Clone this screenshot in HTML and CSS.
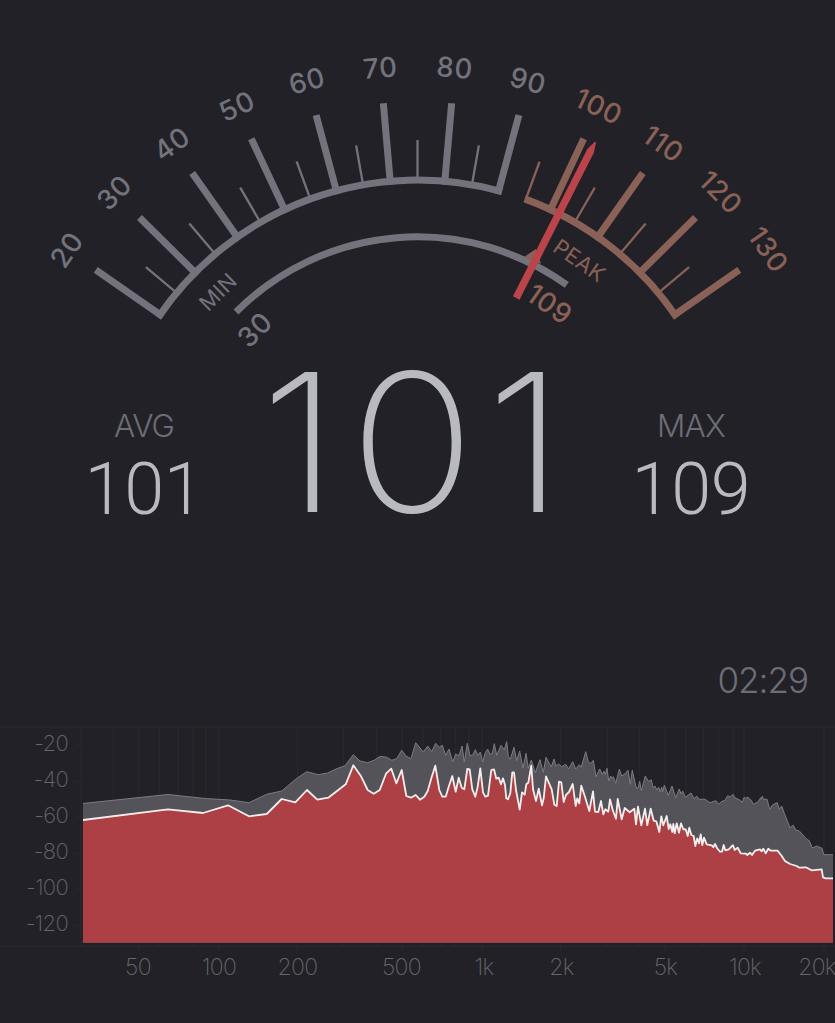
FILE: index.html
```
<!DOCTYPE html>
<html lang="en">
<head>
  <meta charset="UTF-8" />
  <title>Sound Level Meter</title>
  <link rel="stylesheet" href="styles.css">
</head>
<body>

  <svg class="dial" width="835" height="360" viewBox="0 0 835 360">
    <defs>
      <path id="major" d="M0 -310V-391.8" />
      <path id="minor" d="M0 -313.5V-353.5" />
    </defs>

    <!-- everything is drawn around the dial centre, 1 degree per dB -->
    <g transform="translate(417.5 493.5)">
      <g class="scale">
        <path d="M-259.4 -176A313.5 313.5 0 0 1 84.5 -301.9" />
        <use href="#major" transform="rotate(-55.2)" />
        <use href="#major" transform="rotate(-45.2)" />
        <use href="#major" transform="rotate(-35.1)" />
        <use href="#major" transform="rotate(-25.1)" />
        <use href="#major" transform="rotate(-15)" />
        <use href="#major" transform="rotate(-5)" />
        <use href="#major" transform="rotate(5)" />
        <use href="#major" transform="rotate(15)" />
      </g>
      <g class="scale thin">
        <use href="#minor" transform="rotate(-50.2)" />
        <use href="#minor" transform="rotate(-40.2)" />
        <use href="#minor" transform="rotate(-30.1)" />
        <use href="#minor" transform="rotate(-20)" />
        <use href="#minor" transform="rotate(-10)" />
        <use href="#minor" />
        <use href="#minor" transform="rotate(10)" />
      </g>

      <g class="scale hot">
        <path d="M107.2 -294.6A313.5 313.5 0 0 1 259.4 -176" />
        <use href="#major" transform="rotate(25.1)" />
        <use href="#major" transform="rotate(35.1)" />
        <use href="#major" transform="rotate(45.2)" />
        <use href="#major" transform="rotate(55.2)" />
      </g>
      <g class="scale hot thin">
        <use href="#minor" transform="rotate(20.2)" />
        <use href="#minor" transform="rotate(30.1)" />
        <use href="#minor" transform="rotate(40.2)" />
        <use href="#minor" transform="rotate(50.2)" />
      </g>

      <g class="label">
        <text y="-417.5" transform="rotate(-55.2)">20</text>
        <text y="-417.5" transform="rotate(-45.2)">30</text>
        <text y="-417.5" transform="rotate(-35.1)">40</text>
        <text y="-417.5" transform="rotate(-25)">50</text>
        <text y="-417.5" transform="rotate(-15)">60</text>
        <text y="-417.5" transform="rotate(-5)">70</text>
        <text y="-417.5" transform="rotate(5)">80</text>
        <text y="-417.5" transform="rotate(15)">90</text>
        <text y="-221" transform="rotate(-44.8)">30</text>
        <text class="caption" y="-276" transform="rotate(-44.7)">MIN</text>
      </g>
      <g class="label hot">
        <text y="-417.5" transform="rotate(25.1)">100</text>
        <text y="-417.5" transform="rotate(35.1)">110</text>
        <text y="-417.5" transform="rotate(45.2)">120</text>
        <text y="-417.5" transform="rotate(55.2)">130</text>
        <text y="-221" transform="rotate(34.9)">109</text>
        <text class="caption" y="-276" transform="rotate(34.8)">PEAK</text>
      </g>

      <!-- min / peak range -->
      <path class="range" d="M-181.5 -181.5A256.5 256.5 0 0 1 149.3 -208.6" />
      <path class="peak-mark" d="M106.5 -236.5L118.500 -244.500L123.500 -229.500Z" />

      <path class="needle" transform="rotate(26.8)" d="M-3.7 -219V-384L-.4 -394H1L3.7 -384V-219Z" />
    </g>
  </svg>

  <div class="readouts">
    <div class="side">
      <div class="name">AVG</div>
      <div class="value">101</div>
    </div>
    <div class="current">101</div>
    <div class="side">
      <div class="name">MAX</div>
      <div class="value">109</div>
    </div>
  </div>

  <div class="timer">02:29</div>

  <svg class="spectrum" width="835" height="297" viewBox="0 726 835 297">
    <clipPath id="plot"><rect x="83" y="727" width="750" height="215.700" /></clipPath>

    <path class="grid" d="M0 727H835M0 946.5H835M81 727V946M113.500 727V946M138.500 727V951M159.500 727V946M178 727V946M193 727V946M206 727V946M218.500 727V951M297.500 727V951M343.500 727V946M376.500 727V946M402 727V951M423 727V946M440.500 727V946M455.500 727V946M469 727V946M482 727V951M560.500 727V951M607.500 727V946M639.500 727V946M665 727V951M686 727V946M703.500 727V946M718.500 727V946M733.500 727V946M744 727V951M824 727V951" />
    <path class="grid" d="M75 745.500H83M75 781.500H83M75 817.500H83M75 853.500H83M75 889.500H83M75 925.500H83" />

    <!-- the curves run past the plot area so only their tops get an outline -->
    <g clip-path="url(#plot)">
      <path class="peak-curve" d="M78 804L168 794.500L205 798.500L230 800L249 802.700L266.700 794.300L281.700 791L296 779L306.700 771.700L318.300 774.700L327.700 773L336.700 768.700L345 765.700L353.300 754.700L360 761L367.700 762.700L374 760.300L380.300 756.300L386.700 757.300L391.700 760.300L396.700 758.700L401.700 750.300L406 756L411 758.700L415.700 742.700L423.300 752L427.700 746L431.700 751.700L435.700 743.300L439.300 747.300L442.300 745.300L445.700 755.300L449 749L452.700 762L455.700 754L459 755.700L462 746L464.300 762L467.300 743.300L470 755.700L472.700 755L475.300 749.700L477.700 755.300L480.300 752L482.700 762L485.300 752.700L487.700 749L490 754.300L492.300 753.300L494.300 743.700L496.700 755.300L501 745.300L504.300 750L506.700 741.700L508.300 756.700L510.300 759.300L514 747.300L516.700 760.700L519.700 751L523 768.300L526 753.300L528.300 768.300L531.300 760L535.300 772.700L540 759.700L543.300 772.300L546 757.300L551.300 767L554 759L556 766L558.700 764L561.700 766.700L565.700 764.300L568.700 769L572.700 761.700L575.700 769L579.300 764.700L581.300 767.300L585.700 751.700L588 760.700L590.700 763.700L593.300 760.300L596 776.700L599.700 769L602.300 774.300L604 771.300L605.300 774.300L607 768.300L608.700 781L610.700 776L612.300 778.700L613.300 776.700L615.700 783.300L619.300 769.300L621.700 776L625 773.700L628 770.300L630.300 784.300L632.300 770.300L636 787.300L638 788.300L639.700 781.300L641.300 790.700L645.300 776L648.300 781.300L651.300 780L653 787.700L655 786L656.700 790L658.700 787.300L660.300 792L661.700 787.300L662.700 791.700L664.300 785.300L668.300 795.300L672 786L675.700 797.700L679.300 789L681 794L682.700 791L685.300 797.300L691 793L694.300 798.700L696.700 796L699 799.300L705 799.300L710 802.700L716 800.700L718.700 804.300L721.300 801.700L725 800.300L727.700 795.700L730.300 797L733 794.300L735 798L739.300 799.700L742.300 802.300L744 797.300L745.700 798.300L747.700 797L751.700 801L753.300 804.300L758.300 801.700L760.700 797.700L761.300 799.300L762.300 796.300L763.700 799.300L767 799.300L769.700 809.300L772.700 804.700L777.300 802.700L779.300 809.300L781.700 806L784.300 813.300L790 827.700L793.300 825.300L795.700 830L799.300 831L806.700 839.300L809.300 840.700L812.300 848L816.700 846L822 848.300L823.700 854.700H840V950H78Z" />

      <path class="live-curve" d="M78 820.600L168 809.300L203 813L228 805.300L249 816.300L266.700 814L281.700 799L295.300 802.300L307 790L317.300 799.700L328.300 797.700L345.700 784.300L353.300 765.300L360.700 775.700L367.700 790L373.700 793.700L379.700 790L386 773.700L391.300 768.700L396.300 783.300L401.700 770L406.300 796L411 797.700L415.700 795L420 799.700L424.300 796.700L427.700 791L431.700 777L435.300 765.700L439.300 790L442.300 796.700L445.700 796.700L448.700 786.700L452.300 776L455.700 791.700L458.700 777.700L461.700 787.700L464.300 789.300L467.300 769L469.700 769.300L472.300 789.300L475.300 796.700L477.700 786.700L480.300 768.300L483 792.300L485.300 796.700L488 795.700L491.300 770L494 769.300L496.300 778.700L498.700 777.700L501 784.300L503 778.300L505 785L506.300 798.300L508 799.300L510.300 793.300L512.300 772.300L514 772.300L516 790L519.700 809.700L522 792.300L524.700 794.700L526.300 784.300L528.300 782.700L531.300 765.700L533 789L536 801L538.700 788.700L542 805.300L543.700 798.300L546 776.300L551.700 789.300L554.300 804.700L556.700 806L559 781.700L561.300 782.300L563.700 802L566 795L569 792L572.700 784L575.700 806L577.300 798.300L579.300 803.300L581.300 785.700L585 796.700L589.300 811L593 791.300L595 811.700L598.300 812L601 801L603.300 814.300L605.300 809.300L608.300 811.700L610 799.300L612.700 810L616 818.700L617.700 799L621.700 819.300L624.700 808L629.700 812.300L634.300 808.700L636 824.300L638 806.700L641.300 825.300L645 808.700L647.300 825L650.700 808.700L653.700 820.700L656.300 821.300L659.300 832L661.300 816.300L663.300 825.300L666.700 816L668.700 829L670.300 824.300L672.300 832L673.300 824L674.700 833.300L676.700 823.300L679 832.700L681 823.300L683.300 829.300L685.700 829.300L687.700 836L689.300 827.700L691.300 835L693.700 836L695.300 846L697.300 838.300L699 843.300L700.700 834.300L702.300 845L704 837.700L706.700 844.300L711.700 845.300L713.300 847.300L715 844L717 848L720 851.700L722 851.700L723.700 845L725.300 850.300L728.700 849.300L730.700 847.300L733 845.300L734.700 850L737.700 847.700L740.700 853.300L746 853.700L747.300 855L750 852.700L752 855L755 850.700L760 849.300L761.700 851.300L763.300 848.700L765.700 853.300L768.300 848.700L770.700 850.700L777.700 850.700L781.700 856L785 861L790 864L796.700 866L799.300 867.700L805.700 867.300L811.700 870.300L821.700 869.300L823 877.300L825.700 878.300H840V950H78Z" />
    </g>

    <g class="axis db">
      <text x="68" y="751">-20</text>
      <text x="68" y="787">-40</text>
      <text x="68" y="823">-60</text>
      <text x="68" y="859">-80</text>
      <text x="68" y="895">-100</text>
      <text x="68" y="931">-120</text>
    </g>
    <g class="axis hz">
      <text x="138" y="975">50</text>
      <text x="219" y="975">100</text>
      <text x="297.500" y="975">200</text>
      <text x="401.500" y="975">500</text>
      <text x="484" y="975">1k</text>
      <text x="561.500" y="975">2k</text>
      <text x="665.500" y="975">5k</text>
      <text x="745" y="975">10k</text>
      <text x="817" y="975">20k</text>
    </g>
  </svg>

</body>
</html>
```
FILE: styles.css
```
body {
  margin: 0;
  width: 835px;
  height: 1023px;
  display: flex;
  flex-direction: column;
  overflow: hidden;
  background: #222127;
  color: #b9b9c1;
  font-family: Inter, "Liberation Sans", sans-serif;
}
svg {
  display: block;
  flex: none;
}

/* dial */
.scale {
  fill: none;
  stroke: #73737d;
  stroke-width: 7;
}
.scale.thin {
  stroke-width: 2.3;
}
.scale.hot {
  stroke: #8a6156;
}
.label {
  fill: #73737d;
  font-size: 27.5px;
  font-weight: 500;
  letter-spacing: 0.6px;
  text-anchor: middle;
}
.label.hot {
  fill: #8a6156;
}
.caption {
  font-size: 21.5px;
  font-weight: 400;
  letter-spacing: 0.4px;
}
.range {
  fill: none;
  stroke: #73737d;
  stroke-width: 7;
}
.peak-mark {
  fill: #8a6156;
}
.needle {
  fill: #bb444a;
}

/* numbers */
.readouts {
  display: grid;
  grid-template-columns: 190px 1fr 190px;
  padding: 0 49px;
  height: 290px;
}
.side {
  padding-top: 47px;
  text-align: center;
}
.name {
  color: #6d6d76;
  font-size: 31.5px;
  font-weight: 300;
  line-height: 38px;
  letter-spacing: -0.8px;
}
.value {
  font-family: Roboto, sans-serif;
  font-size: 72px;
  font-weight: 300;
  line-height: 90px;
  letter-spacing: -0.3px;
}
.current {
  text-align: center;
  font-size: 193px;
  font-weight: 200;
  line-height: 165px;
  letter-spacing: 9.6px;
  transform: scaleX(1.08);
}
.timer {
  height: 76px;
  padding: 9px 27px 0 0;
  box-sizing: border-box;
  text-align: right;
  color: #6d6d76;
  font-size: 35px;
  font-weight: 300;
  letter-spacing: -1px;
}

/* spectrum */
.grid {
  fill: none;
  stroke: #27272c;
  stroke-width: 1.5;
}
.peak-curve {
  fill: #545359;
  stroke: #7d7c81;
  stroke-width: 1;
}
.live-curve {
  fill: #ad4045;
  stroke: #f5eeee;
  stroke-width: 1.8;
  stroke-linejoin: round;
}
.axis {
  fill: #66666c;
  font-weight: 200;
  letter-spacing: -0.7px;
}
.db {
  font-size: 22px;
  text-anchor: end;
}
.hz {
  font-size: 23px;
  text-anchor: middle;
}
```
